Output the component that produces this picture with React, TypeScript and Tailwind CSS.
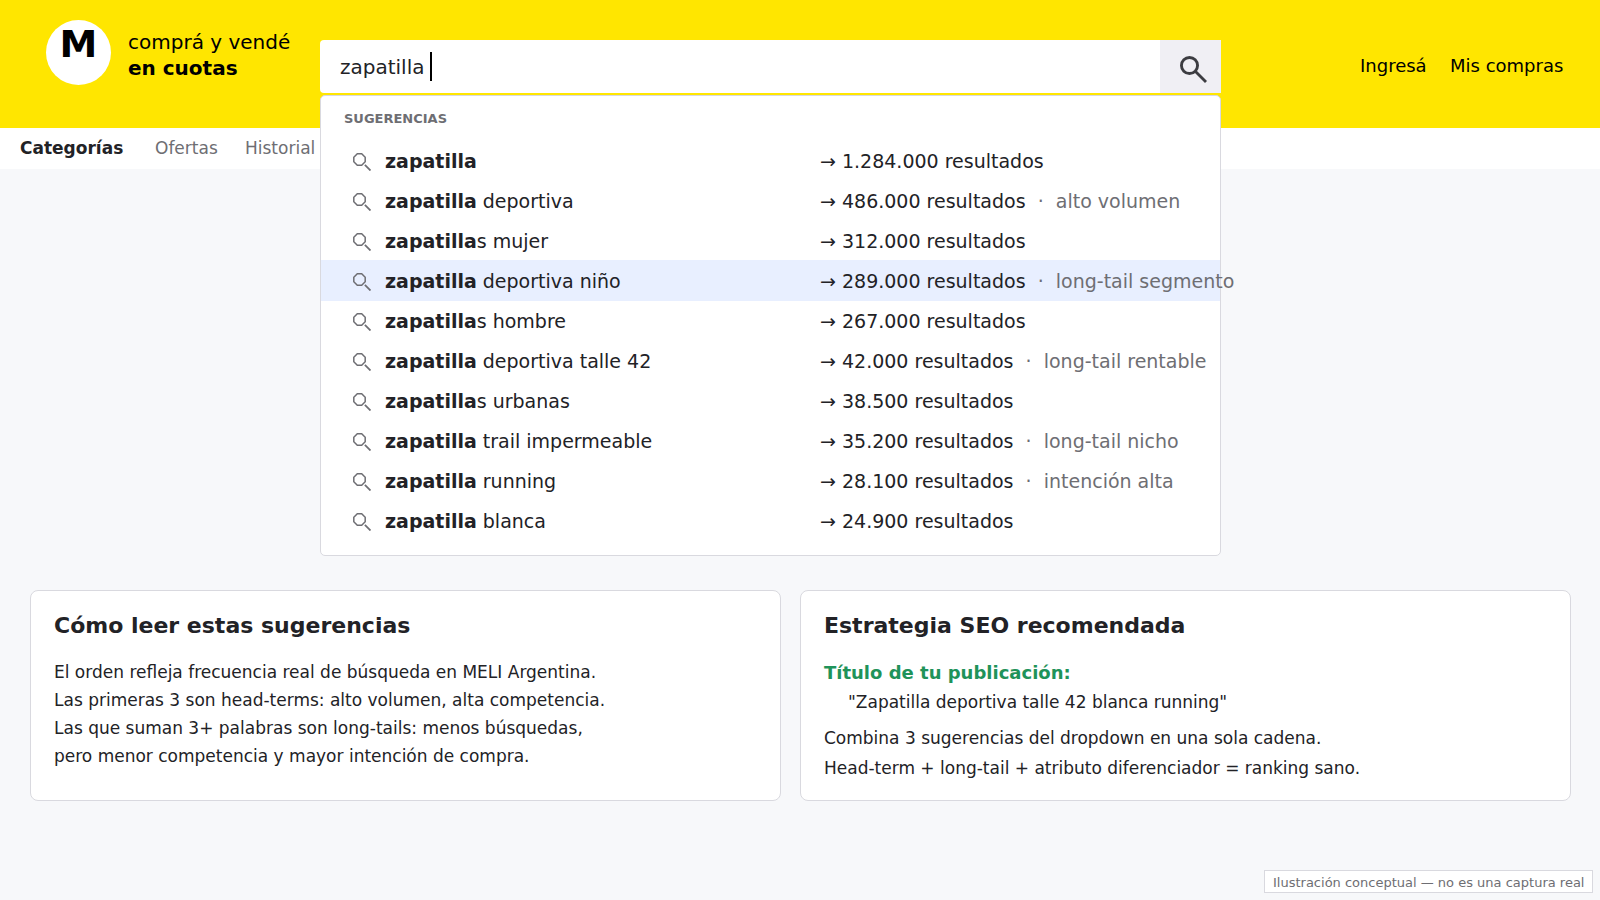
type Suggestion = { rest: string; count: string; note?: string; active?: boolean };

const suggestions: Suggestion[] = [
  { rest: "", count: "1.284.000" },
  { rest: " deportiva", count: "486.000", note: "alto volumen" },
  { rest: "s mujer", count: "312.000" },
  { rest: " deportiva niño", count: "289.000", note: "long-tail segmento", active: true },
  { rest: "s hombre", count: "267.000" },
  { rest: " deportiva talle 42", count: "42.000", note: "long-tail rentable" },
  { rest: "s urbanas", count: "38.500" },
  { rest: " trail impermeable", count: "35.200", note: "long-tail nicho" },
  { rest: " running", count: "28.100", note: "intención alta" },
  { rest: " blanca", count: "24.900" },
];

function SmallSearchIcon() {
  return (
    <svg className="mt-[13px] h-[18px] w-[18px] shrink-0" viewBox="0 0 18 18" fill="none" stroke="#6e6e73">
      <path d="M4.3 0.8 H8.7 L12.2 4.3 V8.7 L8.7 12.2 H4.3 L0.8 8.7 V4.3 Z" strokeWidth="1.5" />
      <path d="M11.9 11.9 L17.5 17.5" strokeWidth="1.8" />
    </svg>
  );
}

function SuggestionRow({ item }: { item: Suggestion }) {
  return (
    <li className={item.active ? "-mb-px flex h-[41px] bg-[#e8efff] pl-8" : "-mb-px flex h-[41px] pl-8"}>
      <SmallSearchIcon />
      <span className="ml-[14px] w-[435px] shrink-0 whitespace-pre leading-[42px]">
        <b>zapatilla</b>
        {item.rest}
      </span>
      <span className="whitespace-pre leading-[42px]">
        → {item.count} resultados
        {item.note && <span className="text-[#6e6e73]">{"  ·  " + item.note}</span>}
      </span>
    </li>
  );
}

function Dropdown() {
  return (
    <div className="absolute left-0 top-[55px] h-[461px] w-[901px] rounded-[5px] border border-[#d9d9df] bg-white text-[19px]">
      <h2 className="mb-3 mt-[14px] pl-[23px] text-[13px] font-bold leading-[18px] text-[#6e6e73]">SUGERENCIAS</h2>
      <ul>
        {suggestions.map((s) => (
          <SuggestionRow key={s.count} item={s} />
        ))}
      </ul>
    </div>
  );
}

function SearchBox() {
  return (
    <div className="relative z-10 ml-[30px] mt-10 h-[53px] w-[901px] shrink-0">
      <div className="flex h-full overflow-hidden rounded-l-[4px] bg-white">
        <div className="flex flex-1 pl-5 text-[20px] leading-[54px]">
          <span className="w-[90px]">zapatilla</span>
          <span className="mt-3 h-[29px] w-0.5 bg-black" />
        </div>
        <button className="flex h-full w-[61px] items-start bg-[#f0eff4] pl-5 pt-4" aria-label="Buscar">
          <svg className="h-7 w-7" viewBox="0 0 28 28" fill="none" stroke="#3c3c41" strokeWidth="2.9">
            <circle cx="9.5" cy="9.5" r="8.05" />
            <path d="M15 15 L26 26" />
          </svg>
        </button>
      </div>
      <Dropdown />
    </div>
  );
}

function Header() {
  return (
    <header className="flex h-32 bg-[#ffe600] pl-[46px] text-black">
      <div className="mt-5 h-[65px] w-[65px] shrink-0 rounded-full bg-white pl-[13.5px] text-[38px] font-bold leading-[48px]">M</div>
      <div className="ml-[17px] mt-[29px] w-[162px] whitespace-nowrap text-[20px] leading-[26px]">
        <div>comprá y vendé</div>
        <div className="font-bold">en cuotas</div>
      </div>
      <div className="text-[#222226]">
        <SearchBox />
      </div>
      <nav className="ml-[139px] mt-[55px] flex whitespace-nowrap text-[18px] leading-[22px]">
        <a className="w-[90px]">Ingresá</a>
        <a>Mis compras</a>
      </nav>
    </header>
  );
}

function InfoCards() {
  return (
    <main className="flex gap-[19px] pl-[30px] pt-[421px] text-[17px]">
      <section className="h-[211px] w-[751px] rounded-[8px] border border-[#d9d9df] bg-white pl-[23px] pt-5">
        <h2 className="mb-[17px] text-[22px] font-bold leading-[30px]">Cómo leer estas sugerencias</h2>
        <div className="leading-[28px]">
          <p>El orden refleja frecuencia real de búsqueda en MELI Argentina.</p>
          <p>Las primeras 3 son head-terms: alto volumen, alta competencia.</p>
          <p>Las que suman 3+ palabras son long-tails: menos búsquedas,</p>
          <p>pero menor competencia y mayor intención de compra.</p>
        </div>
      </section>
      <section className="h-[211px] w-[771px] rounded-[8px] border border-[#d9d9df] bg-white pl-[23px] pt-5">
        <h2 className="mb-[18px] text-[22px] font-bold leading-[30px]">Estrategia SEO recomendada</h2>
        <h3 className="text-[18px] font-bold leading-[28px] text-[#1f935a]">Título de tu publicación:</h3>
        <p className="pl-6 leading-[30px]">"Zapatilla deportiva talle 42 blanca running"</p>
        <p className="mt-[6px] leading-[30px]">Combina 3 sugerencias del dropdown en una sola cadena.</p>
        <p className="leading-[30px]">Head-term + long-tail + atributo diferenciador = ranking sano.</p>
      </section>
    </main>
  );
}

export default function App() {
  return (
    <div className="h-[900px] w-[1600px] overflow-hidden bg-[#f7f8fa] font-['DejaVu_Sans',sans-serif] text-[#222226]">
      <Header />
      <nav className="flex h-[41px] bg-white pl-5 text-[17px] leading-[41px] text-[#6e6e73]">
        <a className="w-[135px] font-bold text-[#222226]">Categorías</a>
        <a className="w-[90px]">Ofertas</a>
        <a>Historial</a>
      </nav>
      <InfoCards />
      <footer className="flex justify-end pr-[7px] pt-[69px]">
        <p className="h-[23px] w-[329px] whitespace-nowrap border border-[#d9d9df] bg-white pl-2 text-[13px] leading-[23px] text-[#6e6e73]">
          Ilustración conceptual — no es una captura real
        </p>
      </footer>
    </div>
  );
}
